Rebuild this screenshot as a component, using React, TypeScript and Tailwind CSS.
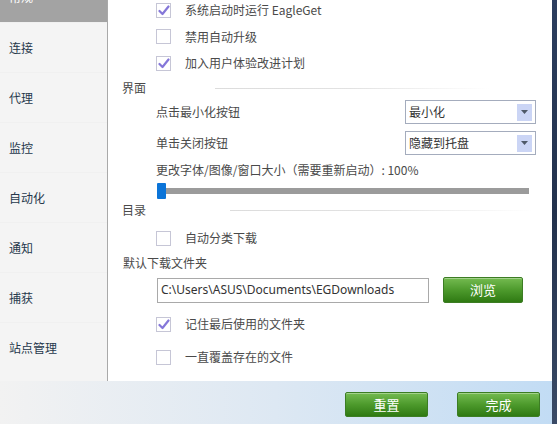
import React from "react";

const cjk = { fontFamily: '"Noto Sans CJK SC", "Noto Sans", sans-serif' };

const navItems = ["常规", "连接", "代理", "监控", "自动化", "通知", "捕获", "站点管理"];

function CheckBox({ checked }: { checked?: boolean }) {
  return (
    <div className="flex h-[15px] w-[15px] items-center justify-center border border-[#c6c6d6] bg-white">
      {checked && (
        <svg width="12" height="11" viewBox="0 0 12 11">
          <path d="M1.5 6 L4.5 9 L10.5 1.5" fill="none" stroke="#8577d9" strokeWidth="2.2" strokeLinecap="round" strokeLinejoin="round" />
        </svg>
      )}
    </div>
  );
}

function CheckRow({ label, checked, className = "" }: { label: string; checked?: boolean; className?: string }) {
  return (
    <div className={`flex items-center pl-[48px] ${className}`}>
      <CheckBox checked={checked} />
      <span className="ml-[14px] text-[12px] text-[#4a4a4a]">{label}</span>
    </div>
  );
}

function Section({ title, lineStart, lineEnd }: { title: string; lineStart: number; lineEnd: number }) {
  return (
    <div className="flex h-[20px] items-center pl-[14px]">
      <span className="text-[12px] text-[#4a4a4a]" style={{ width: lineStart - 122 }}>{title}</span>
      <div className="h-px flex-1 bg-gradient-to-r from-[#dcdcdc] via-[#e2e2e2] to-transparent" style={{ marginRight: 552 - lineEnd }} />
    </div>
  );
}

function Select({ value }: { value: string }) {
  return (
    <div className="flex h-[24px] w-[131px] items-center justify-between border border-[#a4acbd] bg-white pl-[3px] pr-[3px]">
      <span className="text-[12px] text-[#333]">{value}</span>
      <div className="flex h-[17px] w-[15px] items-center justify-center bg-[#cbd5f5]">
        <svg width="7" height="4" viewBox="0 0 7 4">
          <path d="M0 0 H7 L3.5 4 Z" fill="#4f5968" />
        </svg>
      </div>
    </div>
  );
}

function GreenButton({ label, className = "" }: { label: string; className?: string }) {
  return (
    <button className={`flex items-center justify-center rounded-[2px] border border-[#3c7d24] bg-gradient-to-b from-[#74bb50] via-[#4d9a2c] to-[#2f7a12] text-[13px] text-white shadow-[inset_0_1px_0_rgba(255,255,255,0.35)] ${className}`}>
      {label}
    </button>
  );
}

export default function App() {
  return (
    <div className="flex h-[424px] w-[557px] overflow-hidden bg-white" style={cjk}>
      <div className="flex w-[552px] flex-col">
        <div className="flex h-[381px]">
          <div className="w-[108px] overflow-hidden border-r border-[#a9a9a9] bg-[#f4f4f4]">
            <div className="-mt-[28px]">
              {navItems.map((item, i) => (
                <div
                  key={item}
                  className={`flex h-[50px] items-center pl-[9px] text-[12px] ${i === 0 ? "bg-[#a3a3a3] text-white" : "border-t border-[#f0f0f0] text-[#26384c]"}`}
                >
                  {item}
                </div>
              ))}
            </div>
          </div>

          <div className="flex flex-1 flex-col bg-white">
            <CheckRow label="系统启动时运行 EagleGet" checked className="-mt-[3px] h-[26px]" />
            <CheckRow label="禁用自动升级" className="h-[27px]" />
            <CheckRow label="加入用户体验改进计划" checked className="h-[26px]" />

            <div className="mt-[2px]">
              <Section title="界面" lineStart={215} lineEnd={490} />
            </div>

            <div className="mt-[2px] flex h-[24px] items-center justify-between pl-[48px] pr-[16px]">
              <span className="text-[12px] text-[#4a4a4a]">点击最小化按钮</span>
              <Select value="最小化" />
            </div>
            <div className="mt-[7px] flex h-[24px] items-center justify-between pl-[48px] pr-[16px]">
              <span className="text-[12px] text-[#4a4a4a]">单击关闭按钮</span>
              <Select value="隐藏到托盘" />
            </div>

            <div className="mt-[5px] flex h-[20px] items-center pl-[48px] text-[12px] text-[#4a4a4a]">
              更改字体/图像/窗口大小（需要重新启动）: 100%
            </div>

            <div className="mt-[3px] flex h-[16px] items-center pl-[49px] pr-[23px]">
              <div className="h-[16px] w-[9px] rounded-[1px] bg-[#0b74d8]" />
              <div className="h-[6px] flex-1 bg-[#9b9b9b]" />
            </div>

            <div className="mt-[1px]">
              <Section title="目录" lineStart={230} lineEnd={533} />
            </div>

            <CheckRow label="自动分类下载" className="mt-[6px] h-[24px]" />

            <div className="mt-[3px] flex h-[20px] items-center pl-[15px] text-[12px] text-[#4a4a4a]">默认下载文件夹</div>

            <div className="mt-[4px] flex h-[26px] items-center pl-[49px]">
              <div className="flex h-[25px] w-[272px] items-center border border-[#a9a9a9] pl-[3px] text-[12px] text-[#333]" style={{ fontFamily: '"Noto Sans", "Open Sans", sans-serif' }}>
                C:\Users\ASUS\Documents\EGDownloads
              </div>
              <GreenButton label="浏览" className="ml-[14px] h-[26px] w-[80px]" />
            </div>

            <CheckRow label="记住最后使用的文件夹" checked className="mt-[9px] h-[24px]" />
            <CheckRow label="一直覆盖存在的文件" className="mt-[9px] h-[24px]" />
          </div>
        </div>

        <div className="flex h-[43px] items-start justify-end gap-[29px] bg-gradient-to-r from-[#f2f2f2] via-[#dde8f3] to-[#c2dcf4] pr-[12px] pt-[11px]">
          <GreenButton label="重置" className="h-[25px] w-[83px]" />
          <GreenButton label="完成" className="h-[25px] w-[83px]" />
        </div>
      </div>
      <div className="w-[5px] bg-gradient-to-b from-[#2c3e5f] via-[#23324d] to-[#3a4a66]" />
    </div>
  );
}
